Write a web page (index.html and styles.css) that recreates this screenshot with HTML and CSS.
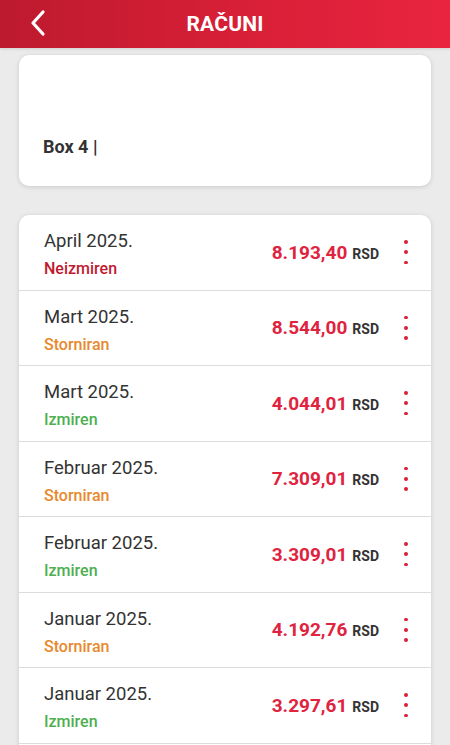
FILE: index.html
```html
<!DOCTYPE html>
<html>
<head>
<meta charset="utf-8">
<link rel="stylesheet" href="styles.css">
</head>
<body>
<header class="topbar">
  <button class="back" aria-label="Nazad">
    <svg width="18" height="28" viewBox="0 0 18 28"><path d="M14 3 L4 14 L14 25" fill="none" stroke="#fff" stroke-width="3.2" stroke-linecap="round" stroke-linejoin="round"/></svg>
  </button>
  <h1 class="title">RAČUNI</h1>
</header>
<main class="content">
  <section class="card box-card">
    <div class="box-label">Box 4 |</div>
  </section>
  <section class="card list">
    <div class="row">
      <div class="info"><div class="month">April 2025.</div><div class="status unpaid">Neizmiren</div></div>
      <div class="amount"><span class="num">8.193,40</span><span class="cur">RSD</span></div>
      <div class="more"><i></i><i></i><i></i></div>
    </div>
    <div class="row">
      <div class="info"><div class="month">Mart 2025.</div><div class="status storno">Storniran</div></div>
      <div class="amount"><span class="num">8.544,00</span><span class="cur">RSD</span></div>
      <div class="more"><i></i><i></i><i></i></div>
    </div>
    <div class="row">
      <div class="info"><div class="month">Mart 2025.</div><div class="status paid">Izmiren</div></div>
      <div class="amount"><span class="num">4.044,01</span><span class="cur">RSD</span></div>
      <div class="more"><i></i><i></i><i></i></div>
    </div>
    <div class="row">
      <div class="info"><div class="month">Februar 2025.</div><div class="status storno">Storniran</div></div>
      <div class="amount"><span class="num">7.309,01</span><span class="cur">RSD</span></div>
      <div class="more"><i></i><i></i><i></i></div>
    </div>
    <div class="row">
      <div class="info"><div class="month">Februar 2025.</div><div class="status paid">Izmiren</div></div>
      <div class="amount"><span class="num">3.309,01</span><span class="cur">RSD</span></div>
      <div class="more"><i></i><i></i><i></i></div>
    </div>
    <div class="row">
      <div class="info"><div class="month">Januar 2025.</div><div class="status storno">Storniran</div></div>
      <div class="amount"><span class="num">4.192,76</span><span class="cur">RSD</span></div>
      <div class="more"><i></i><i></i><i></i></div>
    </div>
    <div class="row">
      <div class="info"><div class="month">Januar 2025.</div><div class="status paid">Izmiren</div></div>
      <div class="amount"><span class="num">3.297,61</span><span class="cur">RSD</span></div>
      <div class="more"><i></i><i></i><i></i></div>
    </div>
  </section>
</main>
</body>
</html>
```
FILE: styles.css
```css
* { box-sizing: border-box; }
html, body { margin: 0; padding: 0; }
body {
  width: 450px;
  height: 745px;
  overflow: hidden;
  background: #ebebeb;
  font-family: Roboto, "Liberation Sans", sans-serif;
  color: #333;
}
.topbar {
  height: 48px;
  background: linear-gradient(90deg, #bd1a2e 0%, #d61f36 50%, #e9243f 100%);
  display: flex;
  align-items: center;
  justify-content: center;
  position: relative;
  box-shadow: 0 1px 3px rgba(0,0,0,0.12);
}
.back {
  position: absolute;
  left: 26px;
  top: 7px;
  width: 24px;
  height: 32px;
  padding: 0;
  border: 0;
  background: transparent;
  display: flex;
  align-items: center;
  justify-content: center;
}
.title {
  margin: 0;
  color: #fff;
  font-size: 21px;
  font-weight: 700;
  letter-spacing: 0.2px;
}
.content {
  padding: 7px 19px 0;
  display: flex;
  flex-direction: column;
  gap: 29px;
}
.card {
  background: #fff;
  border-radius: 10px;
  box-shadow: 0 1px 5px rgba(0,0,0,0.14);
}
.box-card {
  height: 131px;
  padding: 80px 24px 0;
}
.box-label {
  font-size: 18px;
  font-weight: 700;
  color: #333;
  line-height: 24px;
}
.list {
  overflow: hidden;
  padding-bottom: 30px;
}
.row {
  height: 75.5px;
  display: flex;
  align-items: center;
  padding-left: 25px;
  border-bottom: 1px solid #dcdcdc;
}
.info {
  flex: 1;
  display: flex;
  flex-direction: column;
  padding-top: 6px;
}
.month {
  font-size: 18.5px;
  line-height: 26px;
  color: #333;
}
.status {
  font-size: 16px;
  line-height: 26px;
  margin-top: 2px;
  font-weight: 500;
}
.unpaid { color: #c01a30; }
.storno { color: #e8892d; }
.paid { color: #4daf50; }
.amount {
  display: flex;
  align-items: baseline;
  gap: 5px;
}
.num {
  font-size: 19px;
  font-weight: 700;
  color: #e0233f;
}
.cur {
  font-size: 14px;
  font-weight: 700;
  color: #333;
}
.more {
  width: 52px;
  display: flex;
  flex-direction: column;
  align-items: center;
  gap: 6.5px;
  padding-left: 2px;
}
.more i {
  display: block;
  width: 3.8px;
  height: 3.8px;
  border-radius: 50%;
  background: #d8203c;
}
```
